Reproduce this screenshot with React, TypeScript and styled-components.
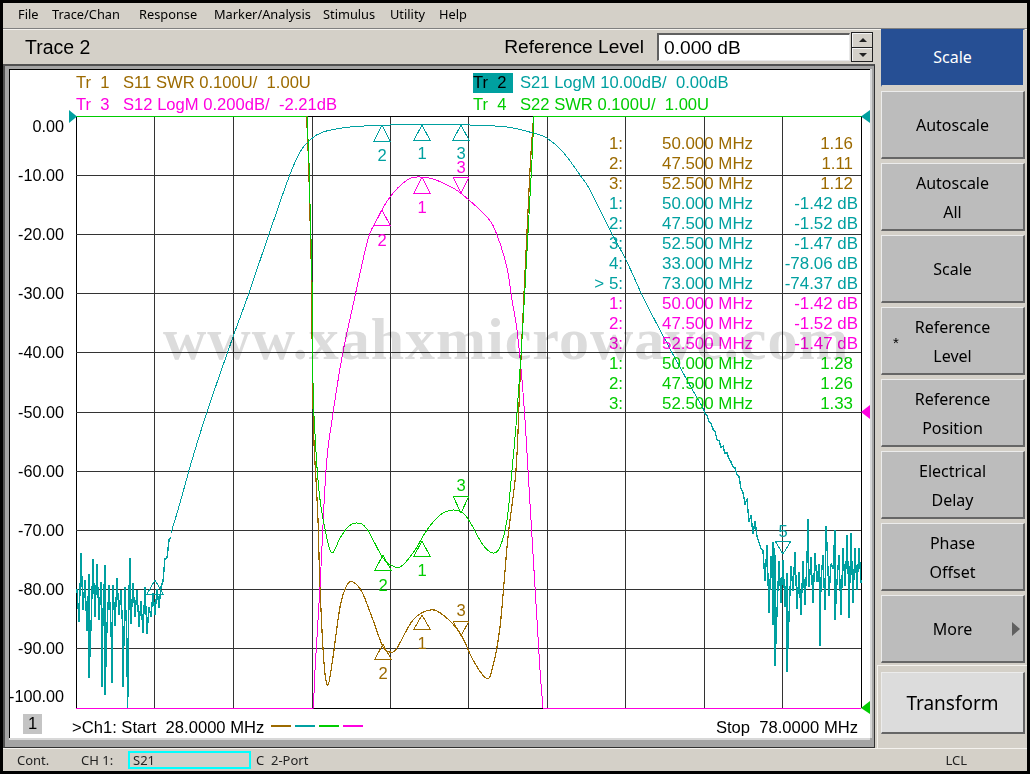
import React from 'react'
import styled, { createGlobalStyle } from 'styled-components'

const BROWN = '#9c6a00'
const TEAL = '#00a0a0'
const GREEN = '#00cc00'
const MAGENTA = '#ff00e0'
const GRID = '#333333'

const GlobalStyle = createGlobalStyle`
  html, body {
    margin: 0;
    padding: 0;
    background: #000;
  }
`

const Screen = styled.div`
  box-sizing: border-box;
  width: 1030px;
  height: 774px;
  padding: 3px 3px 3px 3px;
  background: #000;
  font-family: 'Noto Sans', sans-serif;
  color: #000;
  overflow: hidden;
`

const Desktop = styled.div`
  height: 768px;
  display: flex;
  flex-direction: column;
  background: #d4d0c8;
`

const MenuBar = styled.div`
  box-sizing: border-box;
  height: 26px;
  display: flex;
  align-items: center;
  padding: 0 0 3px 15px;
  font-size: 12.8px;
  border-bottom: 1px solid #808080;
  box-shadow: 0 1px 0 #f4f2ee;
`

const MenuItem = styled.span<{ $width: number }>`
  width: ${(p) => p.$width}px;
`

const Main = styled.div`
  height: 719px;
  display: flex;
`

const LeftColumn = styled.div`
  width: 872px;
  display: flex;
  flex-direction: column;
`

const TitleBar = styled.div`
  box-sizing: border-box;
  height: 35px;
  display: flex;
  align-items: center;
  padding: 1px 0 0 22px;
  font-family: 'Liberation Sans', sans-serif;
  font-size: 19.5px;
`

const RefLabel = styled.span`
  margin-left: auto;
  margin-right: 13px;
  font-size: 19.2px;
`

const ValueBox = styled.div`
  box-sizing: border-box;
  width: 193px;
  height: 28px;
  display: flex;
  align-items: center;
  padding-left: 5px;
  background: #fff;
  font-size: 19.2px;
  border: 1px solid #e8e8e8;
  border-top: 2px solid #606060;
  border-left: 2px solid #606060;
`

const Spinner = styled.div`
  box-sizing: border-box;
  width: 22px;
  height: 30px;
  margin-left: 1px;
  margin-right: 2px;
  display: flex;
  flex-direction: column;
  border: 1px solid #222;
  background: #222;
  gap: 1px;
`

const SpinButton = styled.div`
  flex: 1;
  display: flex;
  align-items: center;
  justify-content: center;
  background: #d4d0c8;
  border-top: 1px solid #f4f4f4;
  border-left: 1px solid #f4f4f4;
`

const SpinArrow = styled.div<{ $down?: boolean }>`
  width: 0;
  height: 0;
  border-left: 4px solid transparent;
  border-right: 4px solid transparent;
  ${(p) => (p.$down ? 'border-top: 4px solid #222;' : 'border-bottom: 4px solid #222;')}
`

const ChartFrame = styled.div`
  box-sizing: border-box;
  height: 684px;
  padding: 3px 4px 9px 4px;
  background: #a4a4a4;
  border-top: 2px solid #505050;
  border-left: 2px solid #505050;
  border-right: 1px solid #303030;
  border-bottom: 1px solid #303030;
`

const ChartPanel = styled.div`
  box-sizing: border-box;
  width: 861px;
  height: 669px;
  display: flex;
  flex-direction: column;
  background: #fff;
  border-top: 1px solid #000;
  border-left: 1px solid #000;
  box-shadow: 0 2px 0 #d8d8d8, 2px 0 0 #d8d8d8;
  font-family: 'Liberation Sans', sans-serif;
  font-size: 16.6px;
  white-space: pre;
`

const Legend = styled.div`
  display: grid;
  grid-template-columns: 397px 1fr;
  grid-template-rows: 22px 16px;
  padding: 2px 0 0 66px;
  line-height: 22px;
`

const LegendEntry = styled.div<{ $color: string }>`
  display: flex;
  gap: 7px;
  height: 22px;
  color: ${(p) => p.$color};
`

const LegendTag = styled.span<{ $color?: string }>`
  width: 40px;
  height: 20px;
  margin-top: 1px;
  line-height: 20px;
  ${(p) => (p.$color ? `background: ${p.$color}; color: #000;` : '')}
`

const ChartArea = styled.div`
  position: relative;
  width: 860px;
  height: 604px;
`

const Plot = styled.svg`
  display: block;
  width: 860px;
  height: 604px;

  text {
    font-family: 'Liberation Sans', sans-serif;
    font-size: 16.6px;
  }

  text.axis {
    font-size: 16.2px;
  }
`

const MarkerTable = styled.div`
  position: absolute;
  left: 580px;
  top: 24px;
  display: grid;
  grid-template-columns: 33px 129px 106px;
  grid-auto-rows: 20px;
  line-height: 20px;
  font-size: 16.9px;
`

const MarkerCell = styled.div<{ $color: string; $end?: boolean; $pad?: boolean; $freq?: boolean }>`
  color: ${(p) => p.$color};
  text-align: ${(p) => (p.$end ? 'right' : 'left')};
  padding-right: ${(p) => (p.$pad ? '5px' : '0')};
  padding-left: ${(p) => (p.$freq ? '39px' : '0')};
`

const Watermark = styled.div`
  position: absolute;
  left: 153px;
  top: 199px;
  font-family: 'Liberation Serif', serif;
  font-weight: bold;
  font-size: 60px;
  line-height: 60px;
  letter-spacing: 1px;
  color: #dcdcdc;
  mix-blend-mode: multiply;
  pointer-events: none;
`

const ChartFooter = styled.div`
  height: 24px;
  display: flex;
  align-items: flex-start;
  padding: 0 12px 0 13px;
`

const ChannelBadge = styled.div`
  width: 19px;
  height: 20px;
  margin-right: 30px;
  background: #c4c4c4;
  text-align: center;
  line-height: 20px;
`

const FooterText = styled.span<{ $right?: boolean }>`
  margin-top: 4px;
  line-height: 19px;
  ${(p) => (p.$right ? 'margin-left: auto;' : '')}
`

const TraceKey = styled.div`
  display: flex;
  gap: 4px;
  margin: 11px 0 0 7px;
`

const TraceDash = styled.div<{ $color: string }>`
  width: 20px;
  height: 2px;
  background: ${(p) => p.$color};
`

const SoftkeyColumn = styled.div`
  width: 152px;
  display: flex;
  flex-direction: column;
`

const SoftkeyStack = styled.div`
  display: flex;
  flex-direction: column;
  gap: 4px;
  padding-left: 6px;
`

const Softkey = styled.div<{ $active?: boolean; $light?: boolean; $height?: number }>`
  box-sizing: border-box;
  position: relative;
  width: 144px;
  height: ${(p) => p.$height ?? 68}px;
  display: flex;
  align-items: center;
  justify-content: center;
  text-align: center;
  padding-top: ${(p) => (p.$active ? '0' : '2px')};
  font-size: ${(p) => (p.$light ? '19px' : '16px')};
  line-height: 29px;
  white-space: pre;
  color: ${(p) => (p.$active ? '#fff' : '#000')};
  background: ${(p) => (p.$active ? '#264f94' : p.$light ? '#dcdcdc' : '#bcbcbc')};
  border-top: 1px solid ${(p) => (p.$active ? '#264f94' : '#ececec')};
  border-left: 1px solid ${(p) => (p.$active ? '#264f94' : '#ececec')};
  border-right: 2px solid ${(p) => (p.$active ? '#d4d0c8' : '#666')};
  border-bottom: 2px solid ${(p) => (p.$active ? '#d4d0c8' : '#666')};
`

const Asterisk = styled.span`
  position: absolute;
  left: 11px;
  top: 20px;
  font-family: 'Liberation Sans', sans-serif;
  font-size: 15px;
`

const MoreArrow = styled.div`
  position: absolute;
  right: 3px;
  top: 26px;
  width: 0;
  height: 0;
  border-top: 7px solid transparent;
  border-bottom: 7px solid transparent;
  border-left: 8px solid #606060;
`

const TransformSection = styled.div`
  flex: 1;
  margin: 2px 0 0 2px;
  padding: 6px 0 0 3px;
  border-top: 1px solid #f4f2ee;
  border-left: 1px solid #f4f2ee;
`

const StatusBar = styled.div`
  box-sizing: border-box;
  height: 22px;
  display: flex;
  align-items: center;
  padding: 0 60px 0 14px;
  font-size: 13px;
  color: #222;
  border-top: 1px solid #f4f2ee;
`

const StatusCell = styled.span<{ $width?: number }>`
  ${(p) => (p.$width ? `width: ${p.$width}px;` : '')}
  white-space: pre;
`

const ActiveParam = styled.div`
  box-sizing: border-box;
  width: 123px;
  height: 18px;
  margin-right: 5px;
  padding-left: 3px;
  line-height: 15px;
  border: 2px solid #00ffff;
`

const StatusRight = styled.span`
  margin-left: auto;
`

type Pt = [number, number]

// page coordinates are kept in the svg viewBox, easier to read off the screenshot
const gridX = [76, 154, 233, 312, 390, 468, 547, 625, 704, 782, 861]
const gridY = [116, 175, 234, 293, 352, 412, 471, 530, 589, 648, 708]
const axisLabels: [string, number][] = [
  ['0.00', 126], ['-10.00', 175], ['-20.00', 234], ['-30.00', 293], ['-40.00', 352], ['-50.00', 412],
  ['-60.00', 471], ['-70.00', 530], ['-80.00', 589], ['-90.00', 648], ['-100.00', 696],
]

const spline = (pts: Pt[]) => {
  let d = `M${pts[0][0]} ${pts[0][1]}`
  for (let i = 0; i < pts.length - 1; i++) {
    const p0 = pts[Math.max(i - 1, 0)]
    const p1 = pts[i]
    const p2 = pts[i + 1]
    const p3 = pts[Math.min(i + 2, pts.length - 1)]
    const c1x = p1[0] + (p2[0] - p0[0]) / 6
    const c1y = p1[1] + (p2[1] - p0[1]) / 6
    const c2x = p2[0] - (p3[0] - p1[0]) / 6
    const c2y = p2[1] - (p3[1] - p1[1]) / 6
    d += `C${c1x.toFixed(1)} ${c1y.toFixed(1)} ${c2x.toFixed(1)} ${c2y.toFixed(1)} ${p2[0]} ${p2[1]}`
  }
  return d
}

const polyline = (pts: Pt[]) => 'M' + pts.map((p) => `${p[0].toFixed(1)} ${p[1].toFixed(1)}`).join('L')

const lerp = (stops: Pt[], x: number) => {
  for (let i = 0; i < stops.length - 1; i++) {
    if (x <= stops[i + 1][0]) {
      const t = (x - stops[i][0]) / (stops[i + 1][0] - stops[i][0])
      return stops[i][1] + (stops[i + 1][1] - stops[i][1]) * t
    }
  }
  return stops[stops.length - 1][1]
}

const makeNoise = (x0: number, x1: number, center: Pt[], amp: Pt[], spikes: Pt[], seed: number) => {
  let s = seed
  const rnd = () => {
    s = (s * 16807) % 2147483647
    return s / 2147483647
  }
  const pts: Pt[] = []
  let i = 0
  for (let x = x0; x <= x1; x += 2) {
    const sign = i % 2 ? 1 : -1
    const a = lerp(amp, x)
    pts.push([x, lerp(center, x) + sign * (0.1 + rnd() * 1.2) * a + (rnd() - 0.5) * a * 0.7])
    i++
  }
  spikes.forEach((sp) => pts.push(sp))
  return pts.sort((a, b) => a[0] - b[0])
}

const tealLeftNoise = makeNoise(
  77, 171,
  [[77, 590], [120, 605], [145, 612], [155, 606], [160, 596], [165, 565], [171, 535]],
  [[77, 30], [120, 30], [145, 20], [155, 14], [165, 7], [171, 3]],
  [[89, 678], [102, 687], [105, 695], [112, 683], [123, 687], [127.4, 708], [128, 693], [130, 558], [81, 553]],
  4711,
)
const tealRightNoise = makeNoise(
  703, 861,
  [[703, 408], [720, 443], [737, 473], [743, 497], [750, 515], [757, 540], [768, 575], [790, 585], [810, 572], [861, 572]],
  [[703, 1], [735, 3], [750, 7], [757, 16], [770, 30], [861, 28]],
  [[775, 666], [787, 672], [773, 625], [820, 646], [808, 519], [826, 526], [835, 620], [849, 618], [773, 542], [847, 535]],
  991,
)

const tealMain: Pt[] = [
  [171, 533], [180, 503], [192, 460], [207, 412], [233, 337], [249, 293], [269, 234], [289, 177], [300, 152],
  [310, 140], [323, 132], [350, 127], [390, 125], [430, 124], [470, 125], [507, 127], [533, 133], [547, 138],
  [563, 152], [580, 175], [590, 190], [610, 230], [627, 262], [643, 297], [660, 330], [687, 380], [703, 408],
]
const magentaTrace: Pt[] = [
  [313.5, 708], [315, 670], [320, 587], [326, 470], [332, 420], [342, 357], [352, 310], [367, 243], [375, 223],
  [390, 197], [407, 180], [417, 177], [433, 179], [453, 188], [463, 195], [487, 217], [497, 235], [507, 268],
  [512, 300], [517, 330], [522, 380], [525, 420], [528, 470], [535, 587], [540, 670], [543, 708],
]
const greenTrace: Pt[] = [
  [307, 116], [309, 163], [310, 203], [312, 280], [312.5, 350], [313.5, 403], [315.5, 443], [318, 480], [322, 513],
  [331, 552], [340, 538], [348, 527], [357, 523], [367, 529], [383, 558], [395, 567], [403, 565], [415, 550],
  [427, 530], [440, 515], [453, 510], [463, 513], [470, 522], [483, 545], [493, 553], [500, 547], [507, 520],
  [512, 470], [517, 413], [523, 323], [528, 233], [532, 160], [534, 116],
]
const brownTrace: Pt[] = [
  [306.6, 116], [308.6, 163], [309.6, 203], [311.6, 280], [312.2, 350], [313, 403], [314, 443], [316, 480], [318, 520],
  [320, 587], [324, 663], [328, 685], [333, 657], [340, 607], [347, 585], [353, 582], [362, 592], [373, 620],
  [383, 647], [390, 652], [397, 648], [413, 620], [430, 610], [443, 615], [460, 633], [473, 660], [486, 678],
  [492, 670], [500, 627], [508, 537], [516, 470], [520, 380], [525.6, 260], [530, 170], [533.6, 116],
]

type MarkerDef = { color: string; x: number; apex: number; base: number; label?: string; labelY?: number }

const markers: MarkerDef[] = [
  { color: TEAL, x: 382, apex: 125, base: 141, label: '2', labelY: 155 },
  { color: TEAL, x: 422, apex: 125, base: 140, label: '1', labelY: 153 },
  { color: TEAL, x: 461, apex: 125, base: 140, label: '3', labelY: 153 },
  { color: TEAL, x: 155, apex: 580, base: 594 },
  { color: TEAL, x: 783, apex: 554, base: 541, label: '5', labelY: 531 },
  { color: MAGENTA, x: 422, apex: 177, base: 193, label: '1', labelY: 207 },
  { color: MAGENTA, x: 382, apex: 210, base: 225, label: '2', labelY: 240 },
  { color: MAGENTA, x: 461, apex: 193, base: 177, label: '3', labelY: 167 },
  { color: GREEN, x: 422, apex: 541, base: 556, label: '1', labelY: 570 },
  { color: GREEN, x: 383, apex: 555, base: 570, label: '2', labelY: 585 },
  { color: GREEN, x: 461, apex: 513, base: 496, label: '3', labelY: 485 },
  { color: BROWN, x: 422, apex: 615, base: 629, label: '1', labelY: 643 },
  { color: BROWN, x: 383, apex: 644, base: 659, label: '2', labelY: 673 },
  { color: BROWN, x: 461, apex: 636, base: 621, label: '3', labelY: 610 },
]

const readouts: { n: string; f: string; v: string; c: string; pad?: boolean }[] = [
  { n: '1:', f: '50.000 MHz', v: '1.16', c: BROWN, pad: true },
  { n: '2:', f: '47.500 MHz', v: '1.11', c: BROWN, pad: true },
  { n: '3:', f: '52.500 MHz', v: '1.12', c: BROWN, pad: true },
  { n: '1:', f: '50.000 MHz', v: '-1.42 dB', c: TEAL },
  { n: '2:', f: '47.500 MHz', v: '-1.52 dB', c: TEAL },
  { n: '3:', f: '52.500 MHz', v: '-1.47 dB', c: TEAL },
  { n: '4:', f: '33.000 MHz', v: '-78.06 dB', c: TEAL },
  { n: '> 5:', f: '73.000 MHz', v: '-74.37 dB', c: TEAL },
  { n: '1:', f: '50.000 MHz', v: '-1.42 dB', c: MAGENTA },
  { n: '2:', f: '47.500 MHz', v: '-1.52 dB', c: MAGENTA },
  { n: '3:', f: '52.500 MHz', v: '-1.47 dB', c: MAGENTA },
  { n: '1:', f: '50.000 MHz', v: '1.28', c: GREEN, pad: true },
  { n: '2:', f: '47.500 MHz', v: '1.26', c: GREEN, pad: true },
  { n: '3:', f: '52.500 MHz', v: '1.33', c: GREEN, pad: true },
]

const softkeys = ['Autoscale', 'Autoscale\nAll', 'Scale', 'Reference\nLevel', 'Reference\nPosition', 'Electrical\nDelay', 'Phase\nOffset']
const menus: [string, number][] = [
  ['File', 34], ['Trace/Chan', 87], ['Response', 75], ['Marker/Analysis', 109], ['Stimulus', 67], ['Utility', 49], ['Help', 30],
]

const Marker = ({ color, x, apex, base, label, labelY }: MarkerDef) => (
  <g>
    <path d={`M${x} ${apex}L${x - 8} ${base}H${x + 8}Z`} fill="none" stroke={color} shapeRendering="crispEdges" />
    {label && (
      <text x={x} y={(labelY ?? 0) + 6} fill={color} textAnchor="middle">
        {label}
      </text>
    )}
  </g>
)

const Trace = ({ d, color, width = 1 }: { d: string; color: string; width?: number }) => (
  <path d={d} fill="none" stroke={color} strokeWidth={width} shapeRendering="crispEdges" />
)

const App = () => {
  return (
    <Screen>
      <GlobalStyle />
      <Desktop>
        <MenuBar>
          {menus.map(([m, w]) => (
            <MenuItem key={m} $width={w}>{m}</MenuItem>
          ))}
        </MenuBar>
        <Main>
          <LeftColumn>
            <TitleBar>
              <span>Trace 2</span>
              <RefLabel>Reference Level</RefLabel>
              <ValueBox>0.000 dB</ValueBox>
              <Spinner>
                <SpinButton>
                  <SpinArrow />
                </SpinButton>
                <SpinButton>
                  <SpinArrow $down />
                </SpinButton>
              </Spinner>
            </TitleBar>
            <ChartFrame>
              <ChartPanel>
                <Legend>
                  <LegendEntry $color={BROWN}>
                    <LegendTag>Tr  1</LegendTag>
                    <span>S11 SWR 0.100U/  1.00U</span>
                  </LegendEntry>
                  <LegendEntry $color={TEAL}>
                    <LegendTag $color={TEAL}>Tr  2</LegendTag>
                    <span>S21 LogM 10.00dB/  0.00dB</span>
                  </LegendEntry>
                  <LegendEntry $color={MAGENTA}>
                    <LegendTag>Tr  3</LegendTag>
                    <span>S12 LogM 0.200dB/  -2.21dB</span>
                  </LegendEntry>
                  <LegendEntry $color={GREEN}>
                    <LegendTag>Tr  4</LegendTag>
                    <span>S22 SWR 0.100U/  1.00U</span>
                  </LegendEntry>
                </Legend>
                <ChartArea>
                  <Plot viewBox="10 110 860 604">
                    {axisLabels.map(([t, y]) => (
                      <text key={t} className="axis" x={64} y={y + 6} textAnchor="end" fill="#000">
                        {t}
                      </text>
                    ))}
                    {gridX.map((x) => (
                      <line key={x} x1={x + 0.5} x2={x + 0.5} y1={116} y2={708} stroke={x === 76 || x === 861 ? '#000' : GRID} />
                    ))}
                    {gridY.map((y) => (
                      <line key={y} x1={76} x2={861} y1={y + 0.5} y2={y + 0.5} stroke={y === 116 || y === 708 ? '#000' : GRID} />
                    ))}
                    <path d="M76 116.5H308M534 116.5H861" stroke={GREEN} fill="none" />
                    <path d="M76 708.5H313.5M543 708.5H861" stroke={MAGENTA} fill="none" />
                    <Trace d={spline(brownTrace)} color={BROWN} width={1.2} />
                    <Trace d={polyline(tealLeftNoise)} color={TEAL} width={1.4} />
                    <Trace d={spline(tealMain)} color={TEAL} />
                    <Trace d={polyline(tealRightNoise)} color={TEAL} width={1.4} />
                    <Trace d={spline(magentaTrace)} color={MAGENTA} />
                    <Trace d={spline(greenTrace)} color={GREEN} />
                    {markers.map((m, i) => (
                      <Marker key={i} {...m} />
                    ))}
                    <path d="M69 110L77 116.5L69 123Z" fill={TEAL} />
                    <path d="M870 110L861 116.5L870 123Z" fill={TEAL} />
                    <path d="M870 405L861 412L870 419Z" fill={MAGENTA} />
                    <path d="M870 701L861 708L870 714Z" fill={GREEN} />
                  </Plot>
                  <MarkerTable>
                    {readouts.map((r, i) => (
                      <React.Fragment key={i}>
                        <MarkerCell $color={r.c} $end>{r.n}</MarkerCell>
                        <MarkerCell $color={r.c} $freq>{r.f}</MarkerCell>
                        <MarkerCell $color={r.c} $end $pad={r.pad}>{r.v}</MarkerCell>
                      </React.Fragment>
                    ))}
                  </MarkerTable>
                  <Watermark>www.xahxmicrowave.com</Watermark>
                </ChartArea>
                <ChartFooter>
                  <ChannelBadge>1</ChannelBadge>
                  <FooterText>{'>Ch1: Start  28.0000 MHz'}</FooterText>
                  <TraceKey>
                    <TraceDash $color={BROWN} />
                    <TraceDash $color={TEAL} />
                    <TraceDash $color={GREEN} />
                    <TraceDash $color={MAGENTA} />
                  </TraceKey>
                  <FooterText $right>Stop  78.0000 MHz</FooterText>
                </ChartFooter>
              </ChartPanel>
            </ChartFrame>
          </LeftColumn>
          <SoftkeyColumn>
            <SoftkeyStack>
              <Softkey $active $height={58}>Scale</Softkey>
              {softkeys.map((k) => (
                <Softkey key={k}>
                  {k === 'Reference\nLevel' && <Asterisk>*</Asterisk>}
                  {k}
                </Softkey>
              ))}
              <Softkey>
                More
                <MoreArrow />
              </Softkey>
            </SoftkeyStack>
            <TransformSection>
              <Softkey $light $height={62}>Transform</Softkey>
            </TransformSection>
          </SoftkeyColumn>
        </Main>
        <StatusBar>
          <StatusCell $width={64}>Cont.</StatusCell>
          <StatusCell $width={47}>CH 1:</StatusCell>
          <ActiveParam>S21</ActiveParam>
          <StatusCell>C  2-Port</StatusCell>
          <StatusRight>LCL</StatusRight>
        </StatusBar>
      </Desktop>
    </Screen>
  )
}

export default App
